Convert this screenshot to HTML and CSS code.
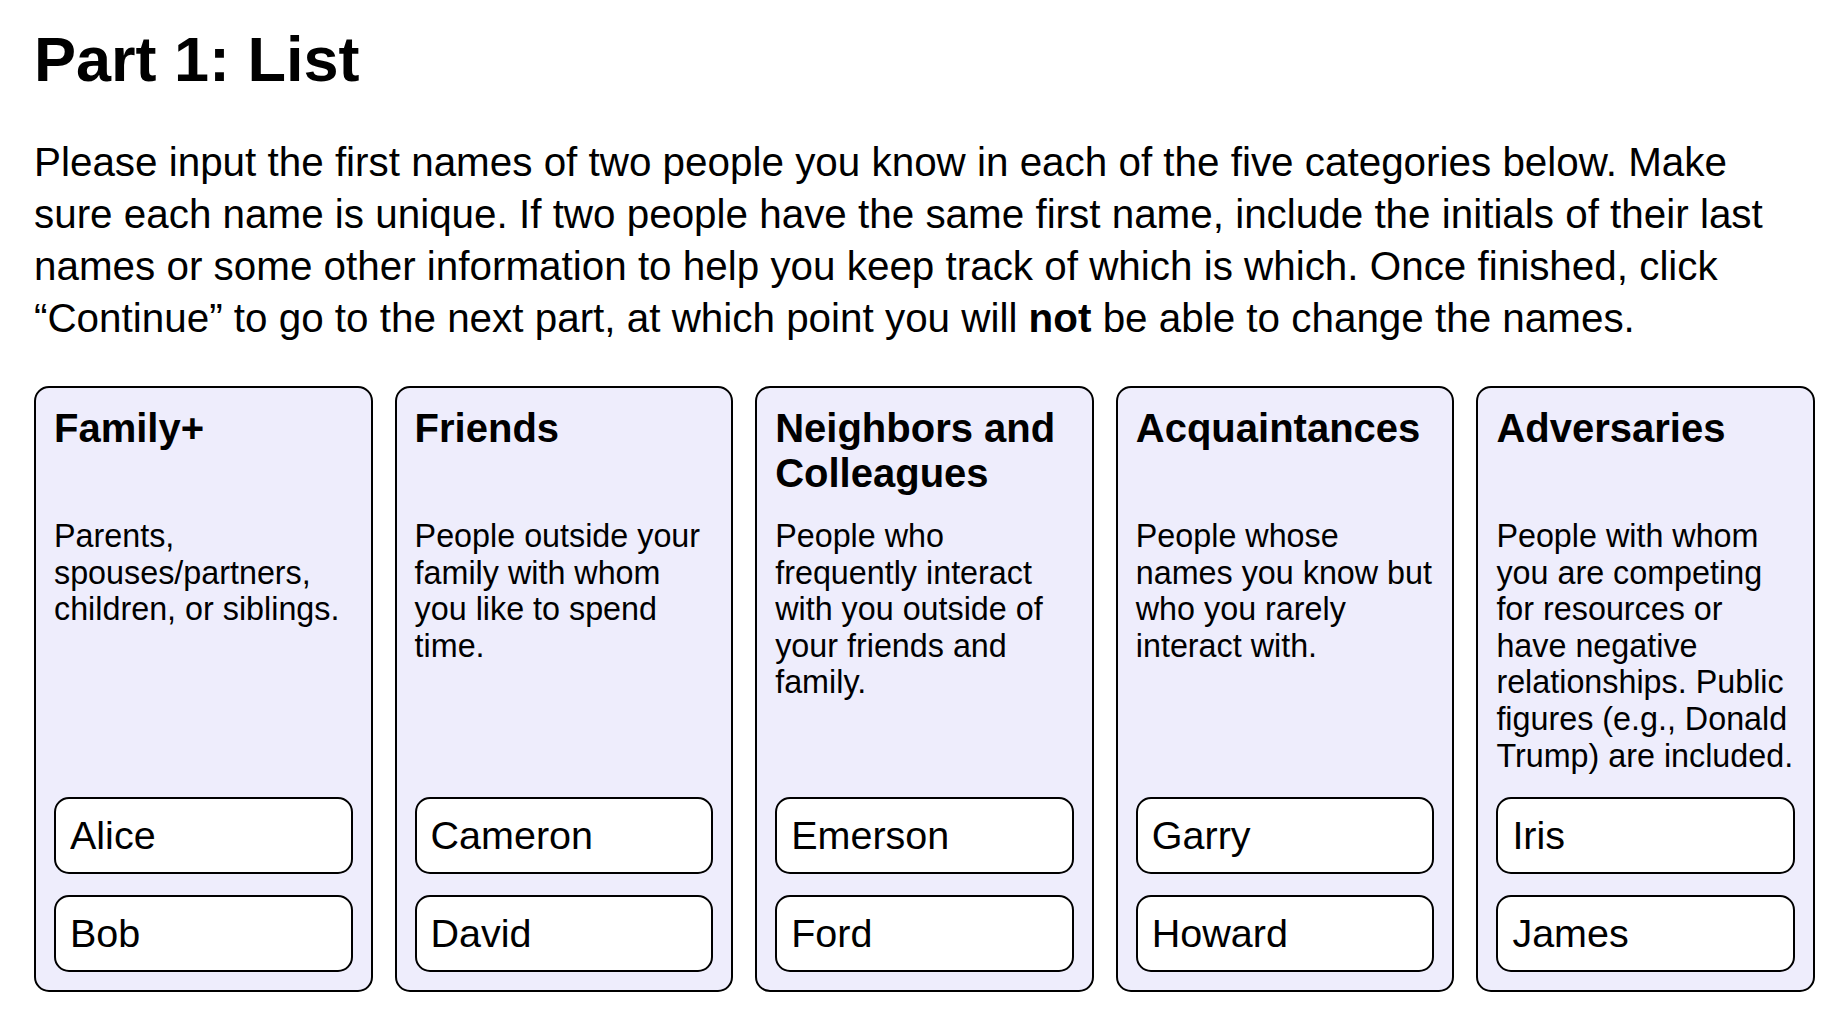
FILE: index.html
```html
<!DOCTYPE html>
<html lang="en">
<head>
<meta charset="utf-8">
<title>Part 1: List</title>
<link rel="stylesheet" href="styles.css">
</head>
<body>
<main class="page">
  <h1 class="title">Part 1: List</h1>
  <p class="intro">Please input the first names of two people you know in each of the five categories below. Make sure each name is unique. If two people have the same first name, include the initials of their last names or some other information to help you keep track of which is which. Once finished, click “Continue” to go to the next part, at which point you will <strong>not</strong> be able to change the names.</p>
  <section class="cards">
    <div class="card">
      <h2 class="card-title">Family+</h2>
      <p class="card-desc">Parents, spouses/partners, children, or siblings.</p>
      <div class="names">
        <input class="name" type="text" value="Alice">
        <input class="name" type="text" value="Bob">
      </div>
    </div>
    <div class="card">
      <h2 class="card-title">Friends</h2>
      <p class="card-desc">People outside your family with whom you like to spend time.</p>
      <div class="names">
        <input class="name" type="text" value="Cameron">
        <input class="name" type="text" value="David">
      </div>
    </div>
    <div class="card">
      <h2 class="card-title">Neighbors and Colleagues</h2>
      <p class="card-desc">People who frequently interact with you outside of your friends and family.</p>
      <div class="names">
        <input class="name" type="text" value="Emerson">
        <input class="name" type="text" value="Ford">
      </div>
    </div>
    <div class="card">
      <h2 class="card-title">Acquaintances</h2>
      <p class="card-desc">People whose names you know but who you rarely interact with.</p>
      <div class="names">
        <input class="name" type="text" value="Garry">
        <input class="name" type="text" value="Howard">
      </div>
    </div>
    <div class="card">
      <h2 class="card-title">Adversaries</h2>
      <p class="card-desc">People with whom you are competing for resources or have negative relationships. Public figures (e.g., Donald Trump) are included.</p>
      <div class="names">
        <input class="name" type="text" value="Iris">
        <input class="name" type="text" value="James">
      </div>
    </div>
  </section>
</main>
</body>
</html>
```

FILE: styles.css
```css
html, body {
  margin: 0;
  padding: 0;
  background: #ffffff;
}

body {
  font-family: "Liberation Sans", Arial, Helvetica, sans-serif;
  color: #000;
}

.page {
  padding: 23px 31px 0 34px;
}

.title {
  font-size: 63px;
  font-weight: 700;
  line-height: normal;
  margin: 0 0 41px 0;
}

.intro {
  font-size: 40.4px;
  line-height: 52px;
  margin: 0 0 42px 0;
  max-width: 1750px;
}

.intro strong {
  font-weight: 700;
}

.cards {
  display: grid;
  grid-template-columns: repeat(5, 1fr);
  gap: 22px;
}

.card {
  display: flex;
  flex-direction: column;
  background: #eeedfc;
  border: 2px solid #000;
  border-radius: 15px;
  padding: 18px;
}

.card-title {
  font-size: 40px;
  font-weight: 700;
  line-height: normal;
  margin: 0;
  min-height: 92px;
}

.card-desc {
  font-size: 32.3px;
  line-height: 36.6px;
  margin: 20px 0 0 0;
}

.names {
  margin-top: auto;
  padding-top: 23px;
  display: flex;
  flex-direction: column;
  gap: 21px;
}

.name {
  box-sizing: border-box;
  width: 100%;
  height: 77px;
  border: 2px solid #000;
  border-radius: 15px;
  background: #fff;
  padding: 0 14px;
  font-family: "Liberation Sans", Arial, Helvetica, sans-serif;
  font-size: 39.5px;
  color: #000;
  outline: none;
}
```
